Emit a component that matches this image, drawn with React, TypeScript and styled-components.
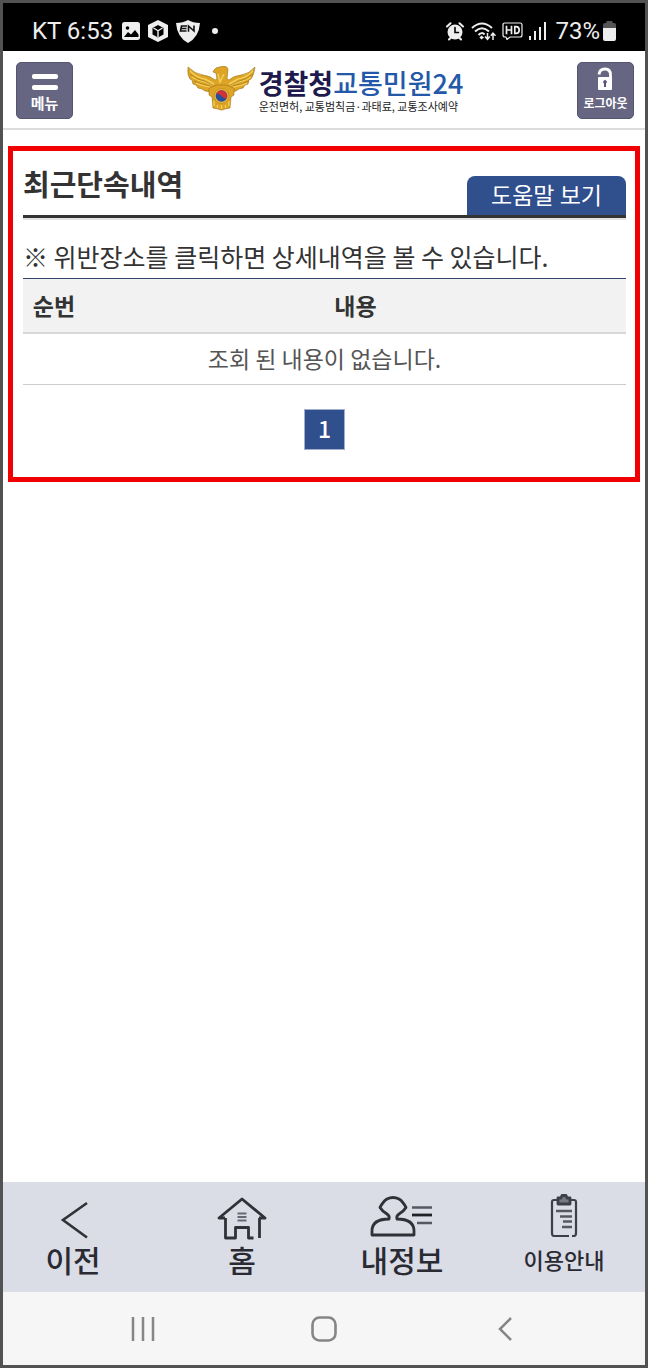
import React from 'react';
import styled, { createGlobalStyle } from 'styled-components';

const GlobalStyle = createGlobalStyle`
  *, *::before, *::after { box-sizing: border-box; }
  body {
    margin: 0;
    background: #fff;
    color: #333;
    font-family: "Noto Sans CJK KR", "Noto Sans", sans-serif;
  }
  button { font: inherit; border: 0; padding: 0; background: none; color: inherit; cursor: pointer; }
  a { color: inherit; text-decoration: none; }
  svg { display: block; flex: none; }
`;

const Screen = styled.div`
  display: flex;
  flex-direction: column;
  min-height: 100vh;
  border: 3px solid #525252;
`;

const StatusBar = styled.div`
  display: flex;
  justify-content: space-between;
  height: 48px;
  padding: 8px 29px 0;
  background: #000;
  color: #eee;
  font: 24px/40px Roboto, sans-serif;
`;

const StatusGroup = styled.div<{ $gap: number }>`
  display: flex;
  align-items: center;
  gap: ${(p) => p.$gap}px;
`;

const Header = styled.header`
  display: flex;
  justify-content: space-between;
  align-items: flex-start;
  height: 79px;
  padding: 11px 11px 0 13px;
  border-bottom: 2px solid #dcdcdc;
`;

const HeaderButton = styled.button<{ $size: number }>`
  display: flex;
  flex-direction: column;
  align-items: center;
  justify-content: flex-end;
  gap: 2px;
  width: 57px;
  height: 57px;
  padding-bottom: 5px;
  border: 1px solid #55556c;
  border-radius: 5px;
  background: #666682;
  color: #fff;
  font-size: ${(p) => p.$size}px;
  font-weight: 700;
  line-height: 20px;
  white-space: nowrap;
`;

const Logo = styled.a`
  display: flex;
  align-items: flex-start;
  gap: 3px;
  padding-top: 4px;
  white-space: nowrap;
`;

const LogoText = styled.span`
  display: flex;
  flex-direction: column;
`;

const LogoName = styled.span`
  color: #1e1a4e;
  font-size: 27px;
  font-weight: 700;
  line-height: 34px;
`;

const LogoAccent = styled.span`
  color: #2459a9;
  font-weight: 500;
`;

const LogoTagline = styled.span`
  color: #222;
  font-size: 11px;
  line-height: 12px;
`;

const Main = styled.main`
  flex: 1;
  padding: 16px 5px;
`;

const Panel = styled.section`
  padding: 0 9px 27px 10px;
  border: 5px solid #f00000;
`;

const PanelHead = styled.div`
  display: flex;
  justify-content: space-between;
  align-items: flex-end;
  height: 67px;
  border-bottom: 3px solid #333;
  box-shadow: 0 2px 0 #e2e2e2;
`;

const Title = styled.h1`
  margin: 0;
  padding-bottom: 12px;
  font-size: 29px;
  font-weight: 700;
  line-height: 40px;
`;

const HelpButton = styled.button`
  height: 39px;
  padding: 0 24px 3px;
  border-radius: 8px 8px 0 0;
  background: #304f8d;
  color: #fff;
  font-size: 23px;
  line-height: 36px;
`;

const Note = styled.p`
  margin: 0;
  padding: 19px 0 3px;
  font-size: 25px;
  line-height: 38px;
`;

const Table = styled.table`
  width: 100%;
  border-collapse: separate;
  border-spacing: 0;
  border-top: 1px solid #33456f;
  font-size: 23px;
  text-align: center;
`;

const HeadCell = styled.th<{ $narrow?: boolean }>`
  width: ${(p) => (p.$narrow ? '62px' : 'auto')};
  height: 55px;
  padding: 0 0 2px;
  border-bottom: 2px solid #d8d8d8;
  background: #f2f2f2;
  font-weight: 700;
`;

const Cell = styled.td`
  height: 51px;
  padding: 0 0 2px;
  border-bottom: 1px solid #ccc;
  color: #555;
`;

const Pagination = styled.nav`
  display: flex;
  justify-content: center;
  padding-top: 24px;
`;

const PageButton = styled.button`
  width: 41px;
  height: 41px;
  padding-bottom: 3px;
  border: 1px solid #a3aecb;
  background: #304f8d;
  color: #fff;
  font-size: 23px;
  font-weight: 500;
  line-height: 36px;
`;

const TabBar = styled.nav`
  display: grid;
  grid-template-columns: 140fr 158fr 122fr 162fr;
  gap: 20px;
  height: 110px;
  background: #dadce6;
`;

const Tab = styled.a<{ $small?: boolean }>`
  display: flex;
  flex-direction: column;
  align-items: center;
  padding-top: 10px;
  color: #2a2a33;
  font-size: ${(p) => (p.$small ? 22 : 30)}px;
  font-weight: 500;
  line-height: 38px;
  white-space: nowrap;
`;

const SystemBar = styled.div`
  display: grid;
  grid-template-columns: repeat(3, 1fr);
  height: 73px;
  padding: 0 49px;
  background: #f6f6f6;
`;

const SystemButton = styled.button`
  display: flex;
  align-items: center;
  justify-content: center;
`;

const ImageIcon = () => (
  <svg width="19" height="18" viewBox="-1 0 19 18">
    <rect width="18" height="18" rx="2.5" fill="#eee" />
    <circle cx="5.5" cy="6" r="1.8" fill="#000" />
    <path d="M2 15l4-5 3 2.5L13 8l3.5 4.5V15z" fill="#000" />
  </svg>
);

const CubeIcon = () => (
  <svg width="20" height="22" viewBox="0 0 20 22">
    <path d="M10 0l10 5v12l-10 5-10-5V5z" fill="#eee" />
    <path d="M10 5l5.5 3v6.5L10 17.5l-5.5-3V8z" fill="#000" />
    <path d="M5.5 8L10 10.8 14.5 8M10 10.8V17" stroke="#eee" strokeWidth="1.4" fill="none" />
  </svg>
);

const ShieldIcon = () => (
  <svg width="24" height="23" viewBox="0 0 24 23">
    <path d="M0 3Q7 3 12 0q5 3 12 3-1 14-12 20Q1 17 0 3z" fill="#eee" />
    <path d="M11 6H5.5L4.5 11H10.5M5 8.5h5.5M12.5 11.8V6l5.500 5V5.500" stroke="#111" strokeWidth="1.6" fill="none" />
  </svg>
);

const DotIcon = () => (
  <svg width="11" height="6" viewBox="0 0 11 6">
    <circle cx="7" cy="3" r="3" fill="#eee" />
  </svg>
);

const AlarmIcon = () => (
  <svg width="19" height="19" viewBox="0 0 19 19" stroke="#eee" fill="none" strokeLinecap="round">
    <circle cx="9" cy="10" r="7.5" fill="#eee" stroke="none" />
    <path d="M1 4.500L4.500 1.200M17 4.500l-3.500-3.300M3 17.500l2-2M15 17.500l-2-2" strokeWidth="2" />
    <path d="M9 5.500V10.500h3.500" stroke="#000" strokeWidth="1.6" />
  </svg>
);

const WifiIcon = () => (
  <svg width="25" height="19" viewBox="0 0 25 19" stroke="#eee" fill="none" strokeWidth="2">
    <path d="M1 6Q11-3 21 6M4 9.500q7-6.500 14 0M7.500 13q3.500-3.500 6-.5" />
    <path d="M10.500 13.500l2.500 2-2.500 2-2-2z" fill="#eee" stroke="none" />
    <path d="M16.500 11v6M14 14.500l2.500 2.800 2.300-2.800M22 18v-6.500M19.800 13.800L22 11.200l2.500 2.600" strokeWidth="1.5" />
  </svg>
);

const HdIcon = () => (
  <svg width="21" height="18" viewBox="0 0 21 18" stroke="#eee" fill="none">
    <path d="M3 1h15q2 0 2 2v10q0 2-2 2H8l-3 2.500L4 15H3q-2 0-2-2V3q0-2 2-2z" strokeWidth="1.2" />
    <path d="M4.500 3.800v8.400M9.500 3.800v8.400M4.500 8h5M12.800 4.600v6.800h1.200q3.200 0 3.200-3.400t-3.200-3.400z" strokeWidth="1.7" />
  </svg>
);

const SignalIcon = () => (
  <svg width="20" height="18" viewBox="0 0 20 18" fill="#eee">
    <rect x="0" y="14" width="2" height="4" />
    <rect x="5" y="9" width="2" height="9" />
    <rect x="10" y="5" width="2" height="13" />
    <rect x="15" y="0" width="2" height="18" />
  </svg>
);

const BatteryIcon = () => (
  <svg width="13" height="20" viewBox="0 0 13 20">
    <path d="M3.500 2V0h6v2H11q2 0 2 2v4H0V4q0-2 2-2z" fill="#555" />
    <path d="M0 7h13v11q0 2-2 2H2q-2 0-2-2z" fill="#eee" />
  </svg>
);

const MenuIcon = () => (
  <svg width="26" height="17" viewBox="0 0 26 17" fill="#fff">
    <rect width="26" height="5" rx="2" />
    <rect y="11" width="26" height="5" rx="2" />
  </svg>
);

const LockIcon = () => (
  <svg width="16" height="25" viewBox="0 0 16 25">
    <path d="M2 8.500Q2.500 3 8 3q5.500 0 5.500 6V12" stroke="#fff" strokeWidth="2.8" fill="none" />
    <rect x="1" y="11" width="14" height="13" rx="1" fill="#fff" />
    <path d="M8 14a2 2 0 0 1 1 3.600V21H7v-3.400A2 2 0 0 1 8 14z" fill="#555570" />
  </svg>
);

const EagleEmblem = () => (
  <svg width="69" height="45" viewBox="0 0 69 45">
    <g fill="#dda426" stroke="#9a6f18" strokeWidth=".6" strokeLinejoin="round">
      <path d="M1 1Q8 8 16 9q8 1 12 5l2-1-1-6-3-1 1-2q2-3 6-3l3-1q4 0 5 3l-1 10 2 1q4-4 12-5 8-1 14-8-1 8-4 12l-2 1-1 4-3 1-2 3-4 1-3 2-5 1H24l-6-1-3-2-4-1-2-3-3-1-1-4-2-1Q0 9 1 1z" />
      <path d="M22 22l8-3h9l8 3v7l-3 2-1 11-5 1-3 1h-1l-3-1-5-1-1-11-3-2z" />
    </g>
    <path d="M3 5q7 7 15 8l9 5M5 11q6 4 13 5l8 3M9 17q7 3 14 4M66 5q-7 7-15 8l-9 5M64 11q-6 4-13 5l-8 3M60 17q-7 3-14 4M31 8l2 8 4-8" stroke="#f3cf55" strokeWidth="1.5" fill="none" />
    <path d="M3 8q7 6 14 7l9 4M7 15q6 3 16 5M66 8q-7 6-14 7l-9 4M62 15q-6 3-16 5" stroke="#a7761a" strokeWidth=".7" fill="none" />
    <path d="M27 35v5M30.500 39v3M34.500 39v4M38.500 39v3M42 35v5" stroke="#f3cf55" strokeWidth="1.3" fill="none" />
    <circle cx="34.5" cy="30" r="7.5" fill="#e3b43c" stroke="#b08427" strokeWidth=".6" />
    <circle cx="34.5" cy="30" r="5.8" fill="#27509b" />
    <path d="M28.900 28.500A5.800 5.800 0 0 1 40.100 31.500Q38 34 34.500 30 31 26.500 28.900 28.500z" fill="#d33138" />
  </svg>
);

const BackIcon = () => (
  <svg width="50" height="48" viewBox="0 0 50 48" fill="none" stroke="#303238" strokeWidth="2.6">
    <path d="M39 11L15 28l24 17.500" />
  </svg>
);

const HomeIcon = () => (
  <svg width="50" height="48" viewBox="0 0 50 48" fill="none" stroke="#303238" strokeWidth="2.8" strokeLinejoin="round">
    <path d="M8 26H2L25 7l23 19h-6" />
    <path d="M8.500 26v20h10V35.500h13V46h5M42.500 26v20" />
    <path d="M20.500 21.500h9M20.500 25h9M20.500 28.500h9" stroke="#666973" strokeWidth="2" />
  </svg>
);

const ProfileIcon = () => (
  <svg width="64" height="48" viewBox="0 0 64 48" fill="none" stroke="#303238" strokeWidth="2.8" strokeLinejoin="round">
    <path d="M19 27Q20 24 17 22 12 19 10 15.500q3-6 7-8.500 6-3 12 0 4 2.500 7 8.500-2 3.500-7 6.500-3 2-2 5 17 0 17 12v4H2v-4q0-12 17-12z" />
    <path d="M42 15.500h20M47 31h15" stroke="#555862" strokeWidth="2.6" />
    <path d="M42 23h20" stroke="#202228" />
  </svg>
);

const ClipboardIcon = () => (
  <svg width="28" height="48" viewBox="0 0 28 48" fill="none" stroke="#3c3f48" strokeWidth="2.2">
    <path d="M7 8H4Q2 8 2 10v31q0 3 2 3h15M22 44h2q2 0 2-3V10q0-2-2-2h-3" />
    <path d="M8 6h3l1-2.500h4L17 6h3v6H8z" fill="#777a83" strokeWidth="2.8" strokeLinejoin="round" />
    <path d="M6 19h16M10 24.500h12M13 29.500h9M12 35h10" stroke="#555862" strokeWidth="2.6" />
  </svg>
);

const RecentsIcon = () => (
  <svg width="24" height="24" viewBox="0 0 24 24" stroke="#858585" strokeWidth="2.5">
    <path d="M2 0v24M12 0v24M22 0v24" />
  </svg>
);

const HomeKeyIcon = () => (
  <svg width="26" height="26" viewBox="0 0 26 26">
    <rect x="1.5" y="1.5" width="23" height="23" rx="7" fill="none" stroke="#858585" strokeWidth="2.6" />
  </svg>
);

const BackKeyIcon = () => (
  <svg width="14" height="24" viewBox="0 0 14 24" fill="none" stroke="#858585" strokeWidth="2.5">
    <path d="M13 1L2 12l11 11" />
  </svg>
);

const tabs = [
  { label: '이전', icon: <BackIcon /> },
  { label: '홈', icon: <HomeIcon /> },
  { label: '내정보', icon: <ProfileIcon /> },
  { label: '이용안내', icon: <ClipboardIcon />, small: true },
];

export default function App() {
  return (
    <>
      <GlobalStyle />
      <Screen>
        <StatusBar>
          <StatusGroup $gap={8}>
            <span>KT 6:53</span>
            <ImageIcon />
            <CubeIcon />
            <ShieldIcon />
            <DotIcon />
          </StatusGroup>
          <StatusGroup $gap={6}>
            <AlarmIcon />
            <WifiIcon />
            <HdIcon />
            <SignalIcon />
            <StatusGroup $gap={3}>
              <span>73%</span>
              <BatteryIcon />
            </StatusGroup>
          </StatusGroup>
        </StatusBar>

        <Header>
          <HeaderButton type="button" $size={15}>
            <MenuIcon />
            메뉴
          </HeaderButton>
          <Logo href="#">
            <EagleEmblem />
            <LogoText>
              <LogoName>
                경찰청<LogoAccent>교통민원24</LogoAccent>
              </LogoName>
              <LogoTagline>운전면허, 교통범칙금·과태료, 교통조사예약</LogoTagline>
            </LogoText>
          </Logo>
          <HeaderButton type="button" $size={12}>
            <LockIcon />
            로그아웃
          </HeaderButton>
        </Header>

        <Main>
          <Panel>
            <PanelHead>
              <Title>최근단속내역</Title>
              <HelpButton type="button">도움말 보기</HelpButton>
            </PanelHead>
            <Note>※ 위반장소를 클릭하면 상세내역을 볼 수 있습니다.</Note>
            <Table>
              <thead>
                <tr>
                  <HeadCell scope="col" $narrow>순번</HeadCell>
                  <HeadCell scope="col">내용</HeadCell>
                </tr>
              </thead>
              <tbody>
                <tr>
                  <Cell colSpan={2}>조회 된 내용이 없습니다.</Cell>
                </tr>
              </tbody>
            </Table>
            <Pagination>
              <PageButton type="button">1</PageButton>
            </Pagination>
          </Panel>
        </Main>

        <TabBar>
          {tabs.map((tab) => (
            <Tab key={tab.label} href="#" $small={tab.small}>
              {tab.icon}
              {tab.label}
            </Tab>
          ))}
        </TabBar>

        <SystemBar>
          <SystemButton type="button" aria-label="최근 앱"><RecentsIcon /></SystemButton>
          <SystemButton type="button" aria-label="홈 화면"><HomeKeyIcon /></SystemButton>
          <SystemButton type="button" aria-label="뒤로"><BackKeyIcon /></SystemButton>
        </SystemBar>
      </Screen>
    </>
  );
}
